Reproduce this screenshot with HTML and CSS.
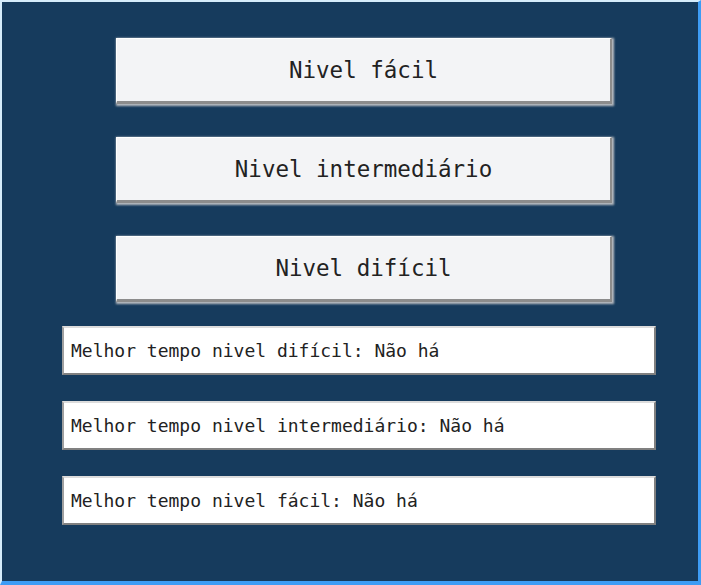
FILE: index.html
```html
<!DOCTYPE html>
<html lang="pt">
<head>
<meta charset="utf-8">
<title>Níveis</title>
<link rel="stylesheet" href="styles.css">
</head>
<body>
<div class="frame">
  <div class="buttons">
    <button class="level-btn">Nivel fácil</button>
    <button class="level-btn">Nivel intermediário</button>
    <button class="level-btn">Nivel difícil</button>
  </div>
  <div class="records">
    <div class="record">Melhor tempo nivel difícil: Não há</div>
    <div class="record">Melhor tempo nivel intermediário: Não há</div>
    <div class="record">Melhor tempo nivel fácil: Não há</div>
  </div>
</div>
</body>
</html>
```

FILE: styles.css
```css
html, body {
  margin: 0;
  padding: 0;
  background: #163b5d;
}

.frame {
  box-sizing: border-box;
  width: 701px;
  height: 585px;
  background: #163b5d;
  border-left: 2px solid #d6ecfb;
  border-top: 2px solid #d6ecfb;
  border-right: 3px solid #3d9cf5;
  border-bottom: 4px solid #3d9cf5;
  padding-top: 36px;
  font-family: "DejaVu Sans Mono", "Liberation Mono", monospace;
  color: #222;
}

.buttons {
  display: flex;
  flex-direction: column;
  gap: 33px;
  padding-left: 114px;
}

.level-btn {
  box-sizing: border-box;
  width: 496px;
  height: 66px;
  background: #f3f4f6;
  border-style: solid;
  border-width: 1px 2px 3px 1px;
  border-color: #ffffff #8c8c8c #8c8c8c #ffffff;
  box-shadow: 1px 1px 2px 1px #b9bcc0;
  font-family: inherit;
  font-size: 22.5px;
  color: #222;
  padding: 0;
  margin: 0;
}

.records {
  display: flex;
  flex-direction: column;
  gap: 26px;
  padding-left: 60px;
  margin-top: 24px;
}

.record {
  box-sizing: border-box;
  width: 594px;
  height: 49px;
  background: #ffffff;
  border-style: solid;
  border-width: 2px;
  border-color: #dcdcdc #808080 #808080 #a0a0a0;
  display: flex;
  align-items: center;
  padding-left: 7px;
  font-size: 18px;
  color: #222;
}
```
